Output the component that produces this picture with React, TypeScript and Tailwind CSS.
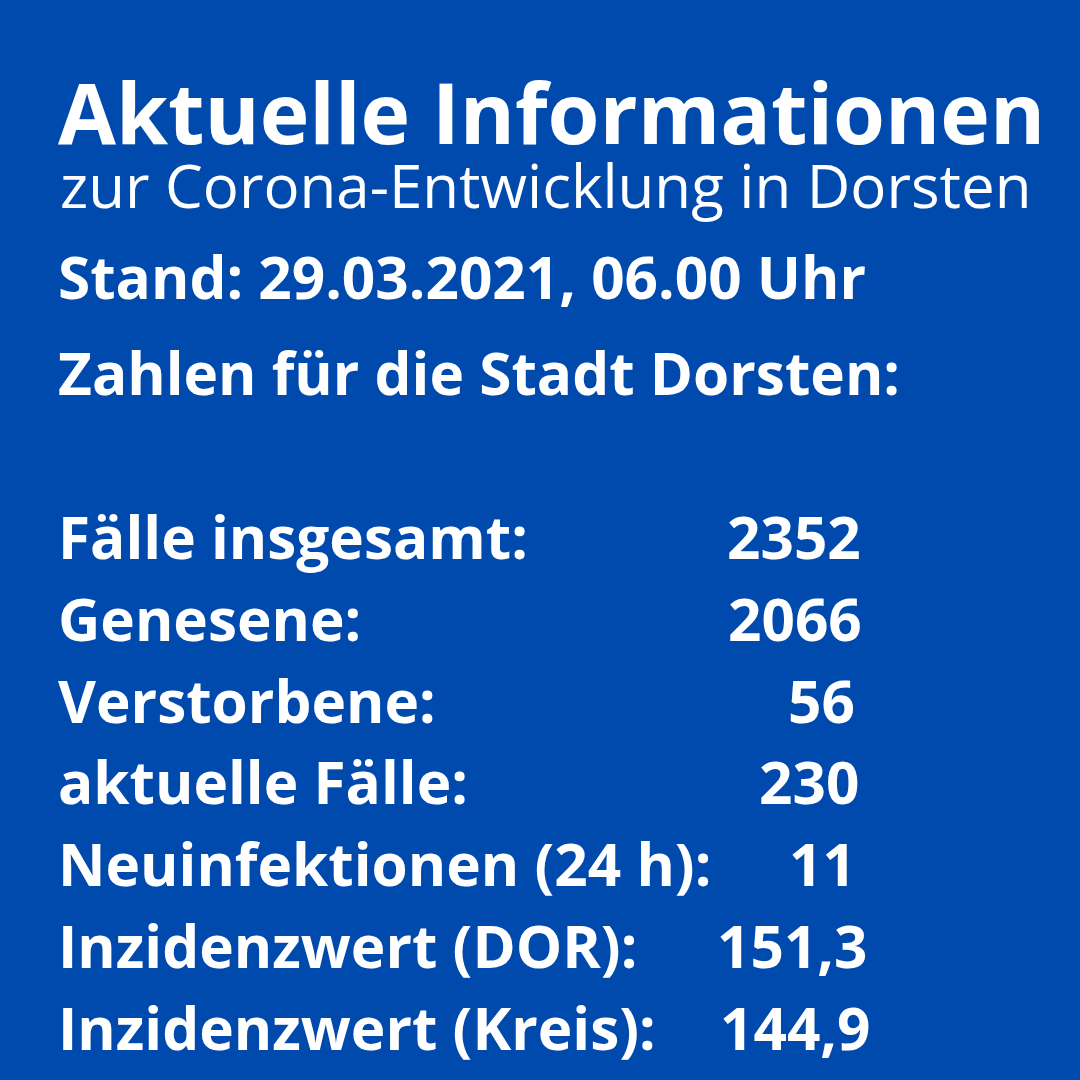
const rows = [
  { label: 'Fälle insgesamt:', value: '2352', pad: 'pl-[19px]' },
  { label: 'Genesene:', value: '2066', pad: 'pl-[20px]' },
  { label: 'Verstorbene:', value: '56', pad: 'pl-[80px]' },
  { label: 'aktuelle Fälle:', value: '230', pad: 'pl-[51px]' },
  { label: 'Neuinfektionen (24 h):', value: '11', pad: 'pl-[81px]' },
  { label: 'Inzidenzwert (DOR):', value: '151,3', pad: 'pl-[9px]' },
  { label: 'Inzidenzwert (Kreis):', value: '144,9', pad: 'pl-[12px]' },
];

export default function App() {
  return (
    <div
      className="w-[1080px] h-[1080px] overflow-hidden bg-[#004aad] text-white pl-[58px] pt-[70px]"
      style={{ fontFamily: '"Open Sans", "Liberation Sans", sans-serif' }}
    >
      <h1 className="text-[84px] leading-[84px] font-bold whitespace-nowrap">Aktuelle Informationen</h1>
      <p className="mt-[1px] pl-[2px] text-[60px] leading-[60px] font-normal whitespace-nowrap">
        zur Corona-Entwicklung in Dorsten
      </p>
      <p className="mt-[32px] text-[58.5px] leading-[58.5px] font-bold whitespace-nowrap">Stand: 29.03.2021, 06.00 Uhr</p>
      <p className="mt-[37px] text-[58.5px] leading-[58.5px] font-bold whitespace-nowrap">Zahlen für die Stadt Dorsten:</p>

      <div className="mt-[95px] flex flex-col">
        {rows.map((row) => (
          <div key={row.label} className="grid grid-cols-[650px_auto] text-[58.5px] leading-[81.8px] font-bold whitespace-nowrap">
            <span>{row.label}</span>
            <span className={row.pad}>{row.value}</span>
          </div>
        ))}
      </div>
    </div>
  );
}
